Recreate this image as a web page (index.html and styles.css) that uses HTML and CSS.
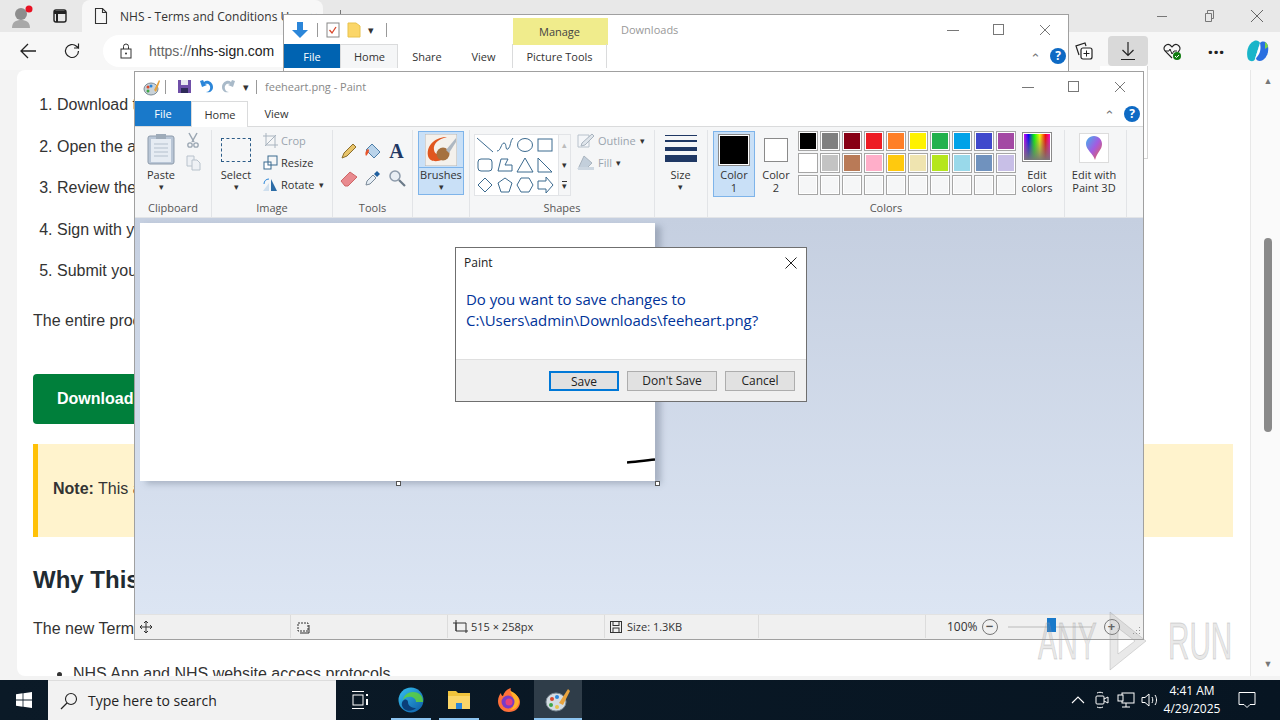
FILE: index.html
```html
<!DOCTYPE html>
<html lang="en">
<head>
  <meta charset="UTF-8" />
  <title>feeheart.png - Paint</title>
  <link rel="stylesheet" href="styles.css">
</head>
<body>

  <!-- browser behind the windows -->
  <div class="browser">
    <div class="tab-strip">
      <div class="profile">
        <svg width="24" height="24" viewBox="0 0 24 24"><circle cx="11" cy="10" r="6" fill="#8d8d8d"/><path d="M2 24c0-6 4-8 9-8s9 2 9 8z" fill="#a8a8a8"/><circle cx="19" cy="5" r="3.5" fill="#e81123"/></svg>
      </div>
      <div class="tab-switch">
        <svg width="16" height="16" viewBox="0 0 16 16"><rect x="2" y="2" width="12" height="12" rx="2" fill="none" stroke="#222" stroke-width="1.4"/><path d="M2 3h12v3H6v8H4V6H2z" fill="#222"/></svg>
      </div>
      <div class="tab">
        <svg width="14" height="18" viewBox="0 0 14 18"><path d="M1.5 1.5h7l4 4v11h-11zM8.5 1.5v4h4" fill="none" stroke="#333" stroke-width="1.1"/></svg>
        <span class="tab-title">NHS - Terms and Conditions Up</span>
        <span class="tab-close">✕</span>
      </div>
      <div class="tab-divider"></div>
      <div class="browser-controls">
        <svg width="12" height="12" viewBox="0 0 12 12"><path d="M1 6.5h10" stroke="#777"/></svg>
        <svg width="12" height="14" viewBox="0 0 12 14"><path d="M2.5 4.5h6v8h-6zM4.500 4.500v-3h6v8h-2" fill="none" stroke="#777"/></svg>
        <svg width="14" height="14" viewBox="0 0 14 14"><path d="M1 1l12 12M13 1L1 13" stroke="#666"/></svg>
      </div>
    </div>

    <div class="toolbar">
      <div class="nav-btn">
        <svg width="18" height="18" viewBox="0 0 18 18"><path d="M17 9H2M9 2L2 9l7 7" fill="none" stroke="#222" stroke-width="1.3"/></svg>
      </div>
      <div class="nav-btn">
        <svg width="18" height="18" viewBox="0 0 18 18"><path d="M15.500 9a6.500 6.500 0 1 1-2-4.700L15.500 6V1.500M15.500 6H11" fill="none" stroke="#222" stroke-width="1.2"/></svg>
      </div>
      <div class="address">
        <svg width="12" height="16" viewBox="0 0 12 16"><rect x="1" y="6" width="10" height="9" fill="none" stroke="#333"/><path d="M3.500 6V3.500a2.500 2.500 0 0 1 5 0V6" fill="none" stroke="#333"/><circle cx="6" cy="10.500" r="1" fill="#333"/></svg>
        <span><span class="scheme">https://</span>nhs-sign.com</span>
      </div>
      <div class="toolbar-icons">
        <div class="tool-icon">
          <svg width="20" height="20" viewBox="0 0 20 20"><path d="M5 14l-3-9 9-3 1 3" fill="none" stroke="#222" stroke-width="1.200"/><rect x="7" y="7" width="11" height="11" rx="2" fill="#fff" stroke="#222" stroke-width="1.200"/><path d="M12.500 9.500v6M9.500 12.500h6" stroke="#222"/></svg>
        </div>
        <div class="tool-icon active">
          <svg width="18" height="20" viewBox="0 0 18 20"><path d="M9 1v13M3.500 9L9 14.500 14.500 9M2 18.500h14" fill="none" stroke="#222" stroke-width="1.200"/></svg>
        </div>
        <div class="tool-icon">
          <svg width="20" height="20" viewBox="0 0 20 20"><path d="M10 17L3 10c-3-4 2-8 5-6l2 2 2-2c3-2 8 2 5 6l-1 1" fill="none" stroke="#222" stroke-width="1.100"/><path d="M3 10h4l1-2 2 5 2-3h3" fill="none" stroke="#222"/><circle cx="15" cy="15" r="4" fill="#107c10"/><path d="M13 15l1.500 1.500L17 14" fill="none" stroke="#fff"/></svg>
        </div>
        <div class="tool-icon dots">···</div>
        <div class="tool-icon copilot">
          <svg width="24" height="24" viewBox="0 0 24 24"><path d="M8 2c3-1 5 0 6 2L9 20c-1 3-5 3-7 0-2-5-1-15 6-18z" fill="#19b5c9"/><path d="M14 4c3-3 7-1 8 3 1 6-1 11-5 14-3 2-7 1-7-2z" fill="#2a6fe0"/><path d="M9 20l5-16c1 5 1 11-5 16z" fill="#fff"/><path d="M19 3c2 1 3 3 3 5l-3 2z" fill="#7bd64a"/></svg>
        </div>
      </div>
    </div>

    <div class="page-wrap">
      <main class="page">
        <ol class="steps">
          <li>Download the signing app</li>
          <li>Open the app on your device</li>
          <li>Review the document</li>
          <li>Sign with your NHS login</li>
          <li>Submit your document</li>
        </ol>
        <p class="intro">The entire process takes only a few minutes.</p>
        <a class="download-btn">Download Now</a>
        <div class="note"><strong>Note:</strong> This agreement must be signed.</div>
        <h2>Why This Update</h2>
        <p>The new Terms and Conditions cover:</p>
        <ul class="bullets">
          <li>NHS App and NHS website access protocols</li>
        </ul>
      </main>
      <div class="scrollbar">
        <span class="arrow">▲</span>
        <div class="thumb"></div>
        <span class="arrow">▼</span>
      </div>
    </div>
  </div>

  <!-- download flyout, mostly covered -->
  <div class="flyout"></div>

  <!-- explorer window -->
  <div class="explorer">
    <div class="exp-title">
      <svg width="18" height="18" viewBox="0 0 18 18"><path d="M6 1h6v8h5l-8 8-8-8h5z" fill="#2b86d9"/></svg>
      <span class="qa-sep"></span>
      <svg width="14" height="16" viewBox="0 0 14 16"><rect x="1" y="1" width="12" height="14" fill="#fff" stroke="#888"/><path d="M3.500 8l2.500 3 4-6" fill="none" stroke="#d9472b" stroke-width="1.300"/></svg>
      <svg width="14" height="16" viewBox="0 0 14 16"><path d="M1 1h8l4 3v11H1z" fill="#fbd668" stroke="#e8c24d"/></svg>
      <span class="qa-drop">▾</span>
      <span class="qa-sep"></span>
      <div class="manage-tab">Manage</div>
      <span class="exp-name">Downloads</span>
      <div class="win-controls">
        <svg width="12" height="12" viewBox="0 0 12 12"><path d="M0 6.500h12" stroke="#777"/></svg>
        <svg width="12" height="12" viewBox="0 0 12 12"><rect x=".5" y=".5" width="10" height="10" fill="none" stroke="#777"/></svg>
        <svg width="12" height="12" viewBox="0 0 12 12"><path d="M1 1l10 10M11 1L1 11" stroke="#777"/></svg>
      </div>
    </div>
    <div class="exp-tabs">
      <div class="file-tab exp-file">File</div>
      <div class="rib-tab current exp-home">Home</div>
      <div class="rib-tab exp-share">Share</div>
      <div class="rib-tab exp-view">View</div>
      <div class="rib-tab picture-tools">Picture Tools</div>
      <div class="rib-right exp-right">
        <span class="chevron">⌃</span>
        <span class="help">?</span>
      </div>
    </div>
  </div>

  <!-- paint window -->
  <div class="paint">
    <div class="paint-title">
      <svg width="18" height="18" viewBox="0 0 18 18"><ellipse cx="8" cy="11" rx="7" ry="6" fill="#c9d2d8" stroke="#7c8a94"/><circle cx="5" cy="9" r="1.500" fill="#d9472b"/><circle cx="8" cy="8" r="1.500" fill="#2b86d9"/><circle cx="5" cy="13" r="1.500" fill="#3fa648"/><path d="M11 12l5-10 1 1-4 11z" fill="#e8a33d"/></svg>
      <span class="qa-sep first"></span>
      <svg width="15" height="15" viewBox="0 0 15 15"><rect x="1" y="1" width="13" height="13" fill="#6f4fa8"/><rect x="4" y="1" width="7" height="5" fill="#e8e8f0"/><rect x="4" y="9" width="7" height="5" fill="#2d2a58"/></svg>
      <svg width="15" height="15" viewBox="0 0 15 15"><path d="M1 2l2 6 5-2-2-1c3-1 6 1 5 5-.5 2-2 3-4 3 4 1 7-1 7-5 0-5-6-8-9-5L4 1z" fill="#2b86d9"/></svg>
      <svg width="15" height="15" viewBox="0 0 15 15"><path d="M14 2l-2 6-5-2 2-1C6 4 3 6 4 10c.5 2 2 3 4 3-4 1-7-1-7-5 0-5 6-8 9-5l1-2z" fill="#a9bac9"/></svg>
      <span class="qa-drop">▾</span>
      <span class="qa-sep last"></span>
      <span class="paint-name">feeheart.png - Paint</span>
      <div class="win-controls">
        <svg width="12" height="12" viewBox="0 0 12 12"><path d="M0 6.500h12" stroke="#777"/></svg>
        <svg width="12" height="12" viewBox="0 0 12 12"><rect x=".5" y=".5" width="10" height="10" fill="none" stroke="#777"/></svg>
        <svg width="12" height="12" viewBox="0 0 12 12"><path d="M1 1l10 10M11 1L1 11" stroke="#777"/></svg>
      </div>
    </div>
    <div class="paint-tabs">
      <div class="file-tab paint-file">File</div>
      <div class="rib-tab current paint-home">Home</div>
      <div class="rib-tab paint-view">View</div>
      <div class="rib-right">
        <span class="chevron">⌃</span>
        <span class="help">?</span>
      </div>
    </div>

    <div class="ribbon">
      <section class="group g-clipboard">
        <div class="group-body">
          <div class="big-tool paste-tool">
            <svg width="28" height="32" viewBox="0 0 28 32"><rect x="1" y="3" width="26" height="28" rx="2" fill="#b9c6d6" stroke="#8d9bab"/><rect x="4" y="6" width="20" height="23" fill="#e6ecf3"/><path d="M7 11h14M7 15h14M7 19h14M7 23h14" stroke="#b4c0cd"/><rect x="9" y="1" width="10" height="5" fill="#9eabb9"/></svg>
            <span>Paste</span>
            <span class="drop">▾</span>
          </div>
          <div class="mini-col">
            <svg width="14" height="16" viewBox="0 0 14 16"><path d="M3 1l5 9M11 1L6 10" stroke="#9aa6b2" stroke-width="1.500"/><circle cx="4" cy="13" r="2.200" fill="none" stroke="#9aa6b2" stroke-width="1.300"/><circle cx="10" cy="13" r="2.200" fill="none" stroke="#9aa6b2" stroke-width="1.300"/></svg>
            <svg width="15" height="16" viewBox="0 0 15 16"><path d="M1 1h7v10H1z" fill="#eef1f5" stroke="#b8c2cc"/><path d="M6 5h5l3 3v7H6z" fill="#eef1f5" stroke="#b8c2cc"/></svg>
          </div>
        </div>
        <div class="group-label">Clipboard</div>
      </section>

      <section class="group g-image">
        <div class="group-body">
          <div class="big-tool select-tool">
            <div class="select-box"></div>
            <span>Select</span>
            <span class="drop">▾</span>
          </div>
          <div class="text-tools">
            <div class="text-tool muted"><svg width="15" height="15" viewBox="0 0 15 15"><path d="M3 0v12h12M0 3h12v12M2 13L13 2" fill="none" stroke="#a9b4bf"/></svg>Crop</div>
            <div class="text-tool"><svg width="15" height="15" viewBox="0 0 15 15"><rect x="1" y="7" width="7" height="7" fill="#fff" stroke="#3b6a8f"/><rect x="5" y="1" width="9" height="9" fill="none" stroke="#3b6a8f"/></svg>Resize</div>
            <div class="text-tool"><svg width="15" height="15" viewBox="0 0 15 15"><path d="M0 14l6-8v8z" fill="#cfdfee"/><path d="M8 14V2l6 12z" fill="#2c6ca6"/><path d="M1 7c0-3 2-5 5-5" fill="none" stroke="#2b86d9"/></svg>Rotate <span class="drop inline">▾</span></div>
          </div>
        </div>
        <div class="group-label">Image</div>
      </section>

      <section class="group g-tools">
        <div class="group-body tool-grid">
          <svg width="18" height="18" viewBox="0 0 18 18"><path d="M2 16l2-5 9-9 3 3-9 9z" fill="#e8c46a" stroke="#8a6d2c"/></svg>
          <svg width="18" height="18" viewBox="0 0 18 18"><path d="M8 2l8 8-6 6-8-8z" fill="#b9d3ea" stroke="#4d7ea8"/><path d="M4 7C1 9 1 12 2 14c2-2 3-4 3-6" fill="#e8552b"/></svg>
          <span class="text-icon">A</span>
          <svg width="18" height="18" viewBox="0 0 18 18"><path d="M1 12l9-9 7 5-9 9H5z" fill="#e98a8f" stroke="#c66"/></svg>
          <svg width="18" height="18" viewBox="0 0 18 18"><path d="M2 16l1-4 6-6 3 3-6 6z" fill="#e6eef5" stroke="#7a8a99"/><path d="M10 5l3-3 3 3-3 3z" fill="#1f5f9f"/></svg>
          <svg width="18" height="18" viewBox="0 0 18 18"><circle cx="7" cy="7" r="5" fill="#e8eef4" stroke="#8d9bab" stroke-width="1.500"/><path d="M11 11l6 6" stroke="#6b7a89" stroke-width="2.200"/></svg>
        </div>
        <div class="group-label"><span>Tools</span></div>
      </section>

      <section class="group g-brushes">
        <div class="brush-btn">
          <div class="brush-icon">
            <svg width="32" height="32" viewBox="0 0 32 32"><rect width="32" height="32" fill="#f4f1ec" stroke="#b5b5b5"/><path d="M3 22C1 10 12 3 22 3c-9 2-14 7-13 13 1 6 7 5 10 1l4 4c-5 7-18 9-20 1z" fill="#e0561f"/><circle cx="18" cy="20" r="6.500" fill="#a5713f"/><path d="M21 16L31 4v4L24 19z" fill="#aeb8c2"/></svg>
          </div>
          <span>Brushes</span>
          <span class="drop">▾</span>
        </div>
      </section>

      <section class="group g-shapes">
        <div class="group-body shapes-body">
          <div class="gallery">
            <div class="gallery-grid">
              <svg viewBox="0 0 18 18"><path d="M1 2l16 14"/></svg>
              <svg viewBox="0 0 18 18"><path d="M1 15c4 0 4-8 7-8s1 8 4 6 2-9 5-11"/></svg>
              <svg viewBox="0 0 18 18"><ellipse cx="9" cy="9" rx="7.500" ry="6.500"/></svg>
              <svg viewBox="0 0 18 18"><rect x="2" y="3" width="14" height="12"/></svg>
              <svg viewBox="0 0 18 18"><rect x="2" y="3" width="14" height="12" rx="3"/></svg>
              <svg viewBox="0 0 18 18"><path d="M2 15l3-12h7l-3 6h7v6z"/></svg>
              <svg viewBox="0 0 18 18"><path d="M9 2l8 14H1z"/></svg>
              <svg viewBox="0 0 18 18"><path d="M2 2l14 14H2z"/></svg>
              <svg viewBox="0 0 18 18"><path d="M9 2l7 7-7 7-7-7z"/></svg>
              <svg viewBox="0 0 18 18"><path d="M9 2l7 5-3 9H5L2 7z"/></svg>
              <svg viewBox="0 0 18 18"><path d="M5 2h8l4 7-4 7H5L1 9z"/></svg>
              <svg viewBox="0 0 18 18"><path d="M2 5h8V1l7 8-7 8v-4H2z"/></svg>
            </div>
            <div class="gallery-scroll">
              <span class="faint">▴</span>
              <span>▾</span>
              <span class="more">▾</span>
            </div>
          </div>
          <div class="text-tools shape-opts">
            <div class="text-tool muted"><svg width="18" height="15" viewBox="0 0 18 15"><path d="M1 2h11v12H1z" fill="#f4f6f9" stroke="#b8c2cc"/><path d="M5 10L15 1l2 2-9 9-4 1z" fill="#dfe5eb" stroke="#a9b4bf"/></svg>Outline <span class="drop inline">▾</span></div>
            <div class="text-tool muted"><svg width="18" height="15" viewBox="0 0 18 15"><path d="M7 1l8 7-6 6H1z" fill="#c3cfdb" stroke="#a9b4bf"/><rect x="1" y="12" width="16" height="3" fill="#cdd7e1"/></svg>Fill <span class="drop inline">▾</span></div>
          </div>
        </div>
        <div class="group-label">Shapes</div>
      </section>

      <section class="group g-size">
        <div class="big-tool size-tool">
          <div class="size-lines">
            <i class="s1"></i><i class="s2"></i><i class="s3"></i><i class="s4"></i>
          </div>
          <span>Size</span>
          <span class="drop">▾</span>
        </div>
      </section>

      <section class="group g-colors">
        <div class="group-body colors-body">
          <div class="color-btn selected">
            <div class="color-well black"></div>
            <span>Color<br>1</span>
          </div>
          <div class="color-btn">
            <div class="color-well small"></div>
            <span>Color<br>2</span>
          </div>
          <div class="palette">
            <i class="c" style="background:#000"></i><i class="c" style="background:#7f7f7f"></i><i class="c" style="background:#880015"></i><i class="c" style="background:#ed1c24"></i><i class="c" style="background:#ff7f27"></i><i class="c" style="background:#fff200"></i><i class="c" style="background:#22b14c"></i><i class="c" style="background:#00a2e8"></i><i class="c" style="background:#3f48cc"></i><i class="c" style="background:#a349a4"></i>
            <i class="c" style="background:#fff"></i><i class="c" style="background:#c3c3c3"></i><i class="c" style="background:#b97a57"></i><i class="c" style="background:#ffaec9"></i><i class="c" style="background:#ffc90e"></i><i class="c" style="background:#efe4b0"></i><i class="c" style="background:#b5e61d"></i><i class="c" style="background:#99d9ea"></i><i class="c" style="background:#7092be"></i><i class="c" style="background:#c8bfe7"></i>
            <i class="c"></i><i class="c"></i><i class="c"></i><i class="c"></i><i class="c"></i><i class="c"></i><i class="c"></i><i class="c"></i><i class="c"></i><i class="c"></i>
          </div>
          <div class="edit-colors">
            <div class="rainbow"></div>
            <span>Edit<br>colors</span>
          </div>
        </div>
        <div class="group-label">Colors</div>
      </section>

      <section class="group g-3d">
        <div class="edit-3d">
          <div class="icon-3d">
            <svg width="18" height="26" viewBox="0 0 18 26"><defs><linearGradient id="drop3d" x1="0" y1="0" x2="1" y2="1"><stop offset="0" stop-color="#3fb4ee"/><stop offset=".5" stop-color="#a45be0"/><stop offset="1" stop-color="#f0603a"/></linearGradient></defs><path d="M9 1c5 0 8 4 8 8 0 6-5 8-7 16-2-7-9-10-9-16 0-4 3-8 8-8z" fill="url(#drop3d)"/></svg>
          </div>
          <span>Edit with<br>Paint 3D</span>
        </div>
      </section>
      <section class="group g-rest"></section>
    </div>

    <div class="canvas-area">
      <div class="canvas">
        <svg class="squiggle" width="28" height="8" viewBox="0 0 28 8"><path d="M0 6.500c6-1 16-1.500 28-3" fill="none" stroke="#000" stroke-width="2.500"/></svg>
        <i class="handle h-bottom"></i>
        <i class="handle h-corner"></i>
      </div>
    </div>

    <div class="statusbar">
      <div class="st c1">
        <svg width="12" height="12" viewBox="0 0 12 12"><path d="M6 0v12M0 6h12M4 2l2-2 2 2M4 10l2 2 2-2M2 4L0 6l2 2M10 4l2 2-2 2" fill="none" stroke="#333"/></svg>
      </div>
      <div class="st c2">
        <svg width="14" height="14" viewBox="0 0 14 14"><path d="M1 3h10v8H1z" fill="none" stroke="#333" stroke-dasharray="2 1"/><path d="M3 13h9V5" fill="none" stroke="#333"/></svg>
      </div>
      <div class="st c3">
        <svg width="15" height="14" viewBox="0 0 15 14"><path d="M3 0v3H0M3 3h10v8H3zM13 13v-2h2M3 3v8" fill="none" stroke="#333"/></svg>
        <span>515 × 258px</span>
      </div>
      <div class="st c4">
        <svg width="12" height="12" viewBox="0 0 12 12"><rect x=".5" y=".5" width="11" height="11" fill="none" stroke="#333"/><rect x="3" y=".5" width="6" height="4" fill="none" stroke="#333"/><rect x="3" y="7" width="6" height="4.500" fill="none" stroke="#333"/></svg>
        <span>Size: 1.3KB</span>
      </div>
      <div class="st c5"></div>
      <div class="st c6">
        <span>100%</span>
        <span class="zoom-round">−</span>
        <div class="zoom-track"><i class="zoom-thumb"></i></div>
        <span class="zoom-round">+</span>
        <svg class="grip" width="10" height="10" viewBox="0 0 10 10"><path d="M8 1h1v1H8zM5 4h1v1H5zM8 4h1v1H8zM2 7h1v1H2zM5 7h1v1H5zM8 7h1v1H8z" fill="#999"/></svg>
      </div>
    </div>
  </div>

  <!-- save dialog -->
  <div class="dialog">
    <div class="dlg-head">
      <span>Paint</span>
      <svg width="12" height="12" viewBox="0 0 12 12"><path d="M.5.5l11 11M11.500.5l-11 11" stroke="#222"/></svg>
    </div>
    <div class="dlg-msg">Do you want to save changes to<br>C:\Users\admin\Downloads\feeheart.png?</div>
    <div class="dlg-foot">
      <button class="dlg-btn default">Save</button>
      <button class="dlg-btn wide">Don't Save</button>
      <button class="dlg-btn">Cancel</button>
    </div>
  </div>

  <!-- watermark -->
  <div class="watermark">
    <span class="wm-any">ANY</span>
    <svg width="40" height="62" viewBox="0 0 40 62"><path d="M2 2l36 29L2 60zM10 18v26l17-13z" fill="#9a9a9a" fill-opacity=".22" fill-rule="evenodd" stroke="#9a9a9a" stroke-opacity=".35"/></svg>
    <span class="wm-run">RUN</span>
  </div>

  <!-- taskbar -->
  <div class="taskbar">
    <div class="start">
      <svg width="16" height="16" viewBox="0 0 16 16"><path d="M0 2.200l6.600-.9v6.300H0zM7.400 1.200L16 0v7.600H7.400zM0 8.400h6.600v6.300L0 13.800zM7.400 8.400H16V16l-8.600-1.200z" fill="#fff"/></svg>
    </div>
    <div class="search">
      <svg width="18" height="18" viewBox="0 0 18 18"><circle cx="11" cy="7" r="5.500" fill="none" stroke="#222" stroke-width="1.100"/><path d="M7 11l-6 6" stroke="#222" stroke-width="1.200"/></svg>
      <span>Type here to search</span>
    </div>
    <div class="task-item">
      <svg width="16" height="18" viewBox="0 0 16 18"><path d="M0 .5h12M0 17.500h12" stroke="#fff"/><rect x="1" y="4" width="10" height="10" fill="none" stroke="#fff"/><rect x="14" y="3" width="2" height="2" fill="#fff"/><rect x="14" y="8" width="2" height="6" fill="#fff"/></svg>
    </div>
    <div class="task-item running t-edge">
      <svg width="26" height="26" viewBox="0 0 26 26"><defs><linearGradient id="edgeg" x1="0" y1="0" x2="1" y2="1"><stop offset="0" stop-color="#35c1f1"/><stop offset="1" stop-color="#0c59a4"/></linearGradient></defs><circle cx="13" cy="13" r="12.500" fill="url(#edgeg)"/><path d="M25 14c0-6-5-9-10-9-5 0-9 3-10 8 2-3 6-4 9-3 3 1 4 3 4 5h7z" fill="#5ed03b" opacity=".85"/><path d="M10 15c0 4 4 6 8 6-3 3-8 4-12 1-3-3-3-7 0-9 2-1 4 0 4 2z" fill="#0a3e7a"/></svg>
    </div>
    <div class="task-item running">
      <svg width="24" height="22" viewBox="0 0 24 22"><path d="M1 2h8l2 2h12v16H1z" fill="#f0c33c"/><path d="M1 7h22v13H1z" fill="#fbd668"/><rect x="9" y="14" width="6" height="6" fill="#2b86d9"/></svg>
    </div>
    <div class="task-item t-firefox">
      <svg width="24" height="26" viewBox="0 0 24 26"><path d="M12 25C5 25 1 20 1 14c0-4 2-7 3-8 0 2 1 3 2 3 1-4 4-7 8-8-1 2 0 4 2 5 4 2 7 5 7 9 0 6-5 10-11 10z" fill="#ff7139"/><path d="M13 4c4 1 9 5 9 10s-4 9-9 9c3-2 4-5 4-8 0-5-3-8-4-11z" fill="#ffb12a"/><circle cx="11" cy="15" r="6.500" fill="#7a3bc6"/><circle cx="12" cy="15" r="3.500" fill="#e83f7a"/></svg>
    </div>
    <div class="task-item running current-app">
      <svg width="26" height="26" viewBox="0 0 26 26"><ellipse cx="11" cy="15" rx="10" ry="9" fill="#d3dce2" stroke="#7c8a94"/><circle cx="7" cy="12" r="2" fill="#d9472b"/><circle cx="12" cy="10" r="2" fill="#2b86d9"/><circle cx="6" cy="18" r="2" fill="#3fa648"/><circle cx="12" cy="20" r="2" fill="#e8c24d"/><path d="M14 16L23 2l2 2-7 14z" fill="#e8a33d"/></svg>
    </div>
    <div class="tray">
      <div class="tray-icon">
        <svg width="14" height="8" viewBox="0 0 14 8"><path d="M1 7l6-6 6 6" fill="none" stroke="#fff" stroke-width="1.100"/></svg>
      </div>
      <div class="tray-icon">
        <svg width="14" height="18" viewBox="0 0 14 18"><rect x="1" y="5" width="8" height="8" rx="1" fill="none" stroke="#fff"/><path d="M9 8l4-2v6l-4-2M2 2c2-1 4-1 6 0M2 16c2 1 4 1 6 0" fill="none" stroke="#fff"/></svg>
      </div>
      <div class="tray-icon">
        <svg width="18" height="16" viewBox="0 0 18 16"><rect x="5" y="1" width="12" height="10" fill="none" stroke="#fff"/><rect x="1" y="3" width="5" height="6" fill="#0b1a27" stroke="#fff"/><path d="M5 15h8M9 11v4" stroke="#fff"/></svg>
      </div>
      <div class="tray-icon">
        <svg width="18" height="16" viewBox="0 0 18 16"><path d="M1 5.500h3L8 2v12l-4-3.500H1z" fill="none" stroke="#fff"/><path d="M11 5c1 2 1 4 0 6M14 3c2 3 2 7 0 10" fill="none" stroke="#fff"/></svg>
      </div>
      <div class="clock"><span>4:41 AM</span><span>4/29/2025</span></div>
      <svg class="notify" width="18" height="18" viewBox="0 0 18 18"><path d="M1 1.500h16v12h-5l-3 3-3-3H1z" fill="none" stroke="#fff"/></svg>
    </div>
  </div>

</body>
</html>
```

FILE: styles.css
```css
body {
  margin: 0;
  width: 1280px;
  height: 720px;
  overflow: hidden;
  position: relative;
  font-family: "Open Sans", "Noto Sans", sans-serif;
  font-size: 11px;
  color: #333;
  background: #f3f3f3;
}

svg {
  display: block;
  flex-shrink: 0;
}

/* browser */
.browser {
  display: flex;
  flex-direction: column;
  height: 680px;
}

.tab-strip {
  display: flex;
  align-items: center;
  height: 32px;
  background: #e8e8e8;
  flex-shrink: 0;
}

.profile {
  width: 24px;
  margin-left: 10px;
}

.tab-switch {
  margin-left: 18px;
}

.tab {
  display: flex;
  align-items: center;
  gap: 12px;
  width: 241px;
  height: 32px;
  margin-left: 14px;
  padding-left: 12px;
  box-sizing: border-box;
  background: #f7f7f7;
  border-radius: 8px 8px 0 0;
  font-size: 12px;
  color: #333;
}

.tab-title {
  white-space: nowrap;
}

.tab-close {
  font-size: 11px;
}

.tab-divider {
  width: 1px;
  height: 12px;
  margin-left: 17px;
  background: #777;
}

.browser-controls {
  display: flex;
  align-items: center;
  gap: 35px;
  margin-left: auto;
  padding-right: 16px;
}

.toolbar {
  display: flex;
  align-items: center;
  height: 38px;
  background: #f7f7f7;
  flex-shrink: 0;
}

.nav-btn {
  width: 44px;
  display: flex;
  justify-content: center;
  margin-left: 6px;
}

.nav-btn + .nav-btn {
  margin-left: 0;
}

.address {
  display: flex;
  align-items: center;
  gap: 17px;
  width: 900px;
  height: 32px;
  margin-left: 9px;
  padding-left: 17px;
  background: #fff;
  border-radius: 16px;
  font-family: "Liberation Sans", sans-serif;
  font-size: 14px;
  color: #222;
}

.scheme {
  color: #666;
}

.toolbar-icons {
  display: flex;
  align-items: center;
  gap: 4px;
  margin-left: auto;
  padding-right: 2px;
}

.tool-icon {
  width: 40px;
  height: 30px;
  display: flex;
  align-items: center;
  justify-content: center;
  border-radius: 4px;
}

.tool-icon.active {
  background: #d9d9d9;
}

.tool-icon.dots {
  font-size: 20px;
  font-weight: bold;
  color: #222;
}

.tool-icon.copilot {
  margin-left: -2px;
}

.page-wrap {
  flex: 1;
  display: flex;
  min-height: 0;
  margin-left: 17px;
  margin-bottom: 4px;
  background: #fff;
  border-radius: 8px 0 0 8px;
}

.page {
  flex: 1;
  overflow: hidden;
  box-sizing: border-box;
  padding: 22px 17px 0 16px;
  font-family: "Liberation Sans", sans-serif;
  font-size: 16px;
  line-height: 25.6px;
  color: #333;
  white-space: nowrap;
}

.steps {
  margin: 0 0 24px;
  padding-left: 24px;
}

.steps li {
  margin-bottom: 16px;
}

.steps li:last-child {
  margin-bottom: 0;
}

.page p {
  margin: 0;
}

.page .intro {
  margin-bottom: 40px;
}

.download-btn {
  display: block;
  width: 200px;
  height: 50px;
  box-sizing: border-box;
  padding: 12px 24px;
  background: #007f3b;
  color: #fff;
  font-weight: bold;
  border-radius: 4px;
}

.note {
  margin-top: 20px;
  height: 93px;
  box-sizing: border-box;
  padding: 32px 15px;
  background: #fff3cd;
  border-left: 5px solid #ffc107;
}

.page h2 {
  margin: 28px 0 0;
  font-size: 24px;
  line-height: 30px;
  color: #212b32;
}

.page h2 + p {
  margin-top: 21px;
}

.bullets {
  margin: 20px 0 0;
  padding-left: 40px;
}

.scrollbar {
  width: 30px;
  display: flex;
  flex-direction: column;
  align-items: center;
  box-sizing: border-box;
  padding: 5px 0 6px 5px;
  background: #fafafa;
  border-left: 1px solid #e8e8e8;
}

.arrow {
  font-size: 9px;
  line-height: 12px;
  color: #777;
}

.thumb {
  width: 8px;
  height: 194px;
  margin-top: 151px;
  margin-bottom: auto;
  background: #8a8a8a;
  border-radius: 4px;
}

.flyout {
  position: absolute;
  left: 1100px;
  top: 66px;
  width: 47px;
  height: 92px;
  background: #fff;
  border-right: 1px solid #d5d5d5;
  border-bottom: 1px solid #d5d5d5;
}

/* window chrome */
.explorer,
.paint {
  position: absolute;
  box-sizing: border-box;
  background: #fff;
  border: 1px solid #a0a0a0;
}

.explorer {
  left: 283px;
  top: 14px;
  width: 786px;
  height: 58px;
}

.paint {
  left: 134px;
  top: 71px;
  width: 1010px;
  height: 569px;
  display: flex;
  flex-direction: column;
}

.exp-title,
.paint-title {
  display: flex;
  align-items: center;
  gap: 7px;
  height: 29px;
}

.exp-title {
  padding-left: 7px;
}

.paint-title {
  padding-left: 8px;
}

.qa-sep {
  width: 1px;
  height: 14px;
  background: #999;
  margin: 0 1px;
}

.qa-sep.first {
  margin: 0 4px 0 -3px;
}

.qa-sep.last {
  margin: 0 1px 0 -4px;
}

.qa-drop {
  font-size: 11px;
  color: #333;
  width: 10px;
}

.manage-tab {
  width: 95px;
  height: 27px;
  margin: 3px 0 0 118px;
  background: #f0ec8c;
  text-align: center;
  line-height: 27px;
  color: #444;
  padding-right: 2px;
  box-sizing: border-box;
}

.exp-name {
  margin-left: 6px;
  color: #999;
}

.paint-name {
  color: #888;
}

.win-controls {
  display: flex;
  align-items: center;
  gap: 34px;
  margin-left: auto;
  padding-right: 17px;
}

.exp-tabs,
.paint-tabs {
  display: flex;
  align-items: center;
  height: 24px;
}

.paint-tabs {
  height: 25px;
  border-bottom: 1px solid #dadbdc;
  flex-shrink: 0;
}

.file-tab {
  height: 100%;
  width: 56px;
  display: flex;
  align-items: center;
  justify-content: center;
  color: #fff;
}

.exp-file {
  background: #0063b1;
}

.paint-file {
  background: #1979ca;
}

.rib-tab {
  height: 100%;
  display: flex;
  align-items: center;
  justify-content: center;
  color: #333;
  box-sizing: border-box;
}

.rib-tab.current {
  width: 57px;
  background: #f5f6f7;
  border: 1px solid #dadbdc;
  border-bottom: none;
}

.rib-tab.exp-home {
  width: 58px;
  padding-left: 1px;
}

.rib-tab.paint-home {
  background: #fff;
  height: 26px;
  padding-left: 1px;
  align-self: flex-start;
}

.exp-share {
  width: 58px;
}

.exp-view {
  width: 55px;
}

.picture-tools {
  width: 95px;
  margin-left: 1px;
  border-left: 1px solid #dadbdc;
  border-right: 1px solid #dadbdc;
}

.paint-view {
  width: 57px;
}

.rib-right {
  display: flex;
  align-items: center;
  gap: 9px;
  margin-left: auto;
  padding-right: 3px;
}

.exp-right {
  padding-right: 2px;
}

.chevron {
  font-size: 13px;
  line-height: 13px;
  color: #777;
  padding-top: 4px;
}

.help {
  width: 16px;
  height: 16px;
  border-radius: 50%;
  background: #0e6ac4;
  color: #fff;
  font-weight: bold;
  font-size: 12px;
  line-height: 16px;
  text-align: center;
}

/* ribbon */
.ribbon {
  display: flex;
  height: 91px;
  flex-shrink: 0;
  background: #f5f6f7;
  border-bottom: 1px solid #e2e4e7;
  box-sizing: border-box;
}

.group {
  display: flex;
  flex-direction: column;
  box-sizing: border-box;
  border-right: 1px solid #e2e4e7;
  margin: 3px 0 0;
}

.g-clipboard { width: 77px; }
.g-image { width: 121px; }
.g-tools { width: 80px; }
.g-brushes { width: 57px; }
.g-shapes { width: 185px; }
.g-size { width: 53px; }
.g-colors { width: 357px; }
.g-3d { width: 62px; }
.g-rest { flex: 1; border: none; }

.group-body {
  flex: 1;
  display: flex;
}

.group-label {
  height: 19px;
  line-height: 19px;
  text-align: center;
  color: #555;
}

.big-tool {
  display: flex;
  flex-direction: column;
  align-items: center;
  width: 50px;
  line-height: 14px;
  color: #333;
}

.paste-tool {
  margin-left: 1px;
}

.big-tool > svg {
  margin-top: 3px;
  margin-bottom: 3px;
}

.drop {
  font-size: 9px;
  line-height: 9px;
  color: #333;
}

.drop.inline {
  margin-left: 1px;
}

.mini-col {
  display: flex;
  flex-direction: column;
  gap: 7px;
  padding-top: 2px;
}

.select-tool {
  width: 48px;
}

.select-box {
  width: 28px;
  height: 22px;
  margin: 8px 0 6px;
  border: 1px dashed #2c5c88;
}

.text-tools {
  display: flex;
  flex-direction: column;
  gap: 6px;
  padding-top: 2px;
}

.text-tool {
  display: flex;
  align-items: center;
  gap: 3px;
  height: 16px;
  color: #333;
  white-space: nowrap;
}

.text-tool.muted {
  color: #9aa4ae;
}

.g-image .text-tools {
  margin-left: 3px;
}

.tool-grid {
  display: grid;
  grid-template-columns: repeat(3, 24px);
  grid-auto-rows: 27px;
  justify-content: center;
  align-items: center;
  justify-items: center;
  padding-top: 7px;
}

.text-icon {
  font-family: "Liberation Serif", serif;
  font-size: 20px;
  font-weight: bold;
  color: #1f3864;
  line-height: 18px;
}

.brush-btn {
  width: 46px;
  height: 64px;
  margin: 1px 0 0 5px;
  box-sizing: border-box;
  display: flex;
  flex-direction: column;
  align-items: center;
  background: #c9e0f7;
  border: 1px solid #7eb4ea;
  line-height: 14px;
  color: #333;
}

.brush-icon {
  padding: 2px 0 1px;
  width: 100%;
  display: flex;
  justify-content: center;
  border-bottom: 1px solid #7eb4ea;
}

.shapes-body {
  gap: 6px;
  padding-left: 4px;
}

.gallery {
  display: flex;
  width: 97px;
  height: 62px;
  margin-top: 4px;
  background: #fff;
  border: 1px solid #e2e4e7;
  box-sizing: border-box;
}

.gallery-grid {
  display: grid;
  grid-template-columns: repeat(4, 20px);
  grid-auto-rows: 20px;
  width: 83px;
  justify-items: center;
  align-items: center;
}

.gallery-grid svg {
  width: 18px;
  height: 18px;
  fill: none;
  stroke: #3b6a8f;
}

.gallery-scroll {
  flex: 1;
  display: flex;
  flex-direction: column;
  align-items: center;
  justify-content: space-around;
  background: #f5f6f7;
  border-left: 1px solid #e2e4e7;
  font-size: 9px;
  line-height: 10px;
}

.gallery-scroll .faint {
  color: #bbb;
}

.gallery-scroll .more {
  border-top: 1px solid #333;
  line-height: 8px;
}

.shape-opts {
  padding-top: 2px;
}

.size-tool {
  width: 51px;
}

.size-lines {
  width: 32px;
  height: 34px;
  margin: 2px 0;
}

.size-lines i {
  display: block;
  background: #1f3864;
}

.s1 { height: 1px; margin-top: 3px; }
.s2 { height: 2px; margin-top: 4px; }
.s3 { height: 4px; margin-top: 5px; }
.s4 { height: 7px; margin-top: 4px; }

.colors-body {
  padding-left: 5px;
}

.color-btn {
  width: 42px;
  height: 66px;
  margin-top: 1px;
  box-sizing: border-box;
  display: flex;
  flex-direction: column;
  align-items: center;
  border: 1px solid transparent;
  line-height: 13px;
  text-align: center;
  color: #333;
}

.color-btn.selected {
  background: #c9e0f7;
  border-color: #7eb4ea;
}

.color-well {
  box-sizing: border-box;
  border: 1px solid #8a8a8a;
  box-shadow: inset 0 0 0 1px #fff;
  background: #fff;
}

.color-well.black {
  width: 32px;
  height: 32px;
  margin: 2px 0;
  background: #000;
}

.color-well.small {
  width: 24px;
  height: 24px;
  margin: 6px 0;
}

.palette {
  display: grid;
  grid-template-columns: repeat(10, 20px);
  grid-auto-rows: 20px;
  gap: 2px;
  margin: 1px 0 0 1px;
}

.c {
  display: block;
  border: 1px solid #a6a6a6;
  box-shadow: inset 0 0 0 1px #fff;
  background: #f5f6f7;
}

.edit-colors {
  width: 44px;
  margin-left: -1px;
  display: flex;
  flex-direction: column;
  align-items: center;
  line-height: 13px;
  text-align: center;
  color: #333;
}

.rainbow {
  width: 28px;
  height: 28px;
  margin: 2px 0 6px;
  border: 1px solid #8a8a8a;
  box-shadow: inset 0 0 0 1px #fff;
  background: linear-gradient(to bottom, transparent, #777), linear-gradient(to right, #f0f, #00f, #0f0, #ff0, #f00, #f0f);
}

.edit-3d {
  width: 58px;
  display: flex;
  flex-direction: column;
  align-items: center;
  line-height: 13px;
  text-align: center;
  color: #333;
  white-space: nowrap;
}

.icon-3d {
  width: 28px;
  height: 28px;
  margin: 3px 0 5px;
  display: flex;
  align-items: center;
  justify-content: center;
  background: #fff;
  border: 1px solid #dcdcdc;
}

/* canvas */
.canvas-area {
  flex: 1;
  min-height: 0;
  padding: 5px 0 0 5px;
  background: linear-gradient(to bottom, #c5cfe0, #dce5f3);
}

.canvas {
  position: relative;
  width: 515px;
  height: 258px;
  background: #fff;
  box-shadow: 6px 3px 6px rgba(90, 100, 120, 0.35);
}

.squiggle {
  position: absolute;
  right: 0;
  bottom: 17px;
}

.handle {
  position: absolute;
  width: 5px;
  height: 5px;
  box-sizing: border-box;
  background: #fff;
  border: 1px solid #555;
}

.h-bottom { left: 256px; bottom: -5px; }
.h-corner { right: -5px; bottom: -5px; }

.statusbar {
  display: flex;
  height: 25px;
  flex-shrink: 0;
  padding-bottom: 1px;
  background: #f0f0f0;
  border-top: 1px solid #e2e2e2;
  box-sizing: border-box;
  color: #333;
}

.st {
  display: flex;
  align-items: center;
  gap: 5px;
  box-sizing: border-box;
  padding-left: 5px;
  border-right: 1px solid #dcdcdc;
  font-size: 11px;
}

.c1 { width: 156px; }
.c2 { width: 157px; padding-left: 6px; }
.c3 { width: 157px; padding-left: 5px; gap: 3px; }
.c4 { width: 154px; padding-left: 5px; }
.c5 { width: 167px; }
.c6 {
  flex: 1;
  border: none;
  padding-left: 21px;
  font-size: 12px;
  gap: 4px;
}

.zoom-round {
  width: 14px;
  height: 14px;
  border: 1px solid #777;
  border-radius: 50%;
  line-height: 13px;
  text-align: center;
  font-size: 13px;
  font-weight: bold;
  color: #555;
}

.zoom-track {
  position: relative;
  width: 84px;
  height: 2px;
  margin: 0 8px 0 6px;
  background: #d5d5d5;
}

.zoom-thumb {
  position: absolute;
  left: 39px;
  top: -8px;
  width: 9px;
  height: 14px;
  background: #1979ca;
}

.grip {
  margin: 8px 2px 0 auto;
}

/* save dialog */
.dialog {
  position: absolute;
  left: 455px;
  top: 247px;
  width: 352px;
  height: 155px;
  box-sizing: border-box;
  display: flex;
  flex-direction: column;
  background: #fff;
  border: 1px solid #6f6f6f;
}

.dlg-head {
  display: flex;
  align-items: center;
  justify-content: space-between;
  height: 29px;
  padding: 0 9px 0 8px;
  font-size: 12px;
  color: #222;
}

.dlg-msg {
  flex: 1;
  padding: 12px 0 0 10px;
  font-size: 15px;
  line-height: 21px;
  letter-spacing: -0.05px;
  color: #003399;
  white-space: nowrap;
}

.dlg-foot {
  display: flex;
  justify-content: flex-end;
  align-items: center;
  gap: 8px;
  height: 42px;
  padding-right: 11px;
  background: #f0f0f0;
  border-top: 1px solid #dfdfdf;
  box-sizing: border-box;
}

.dlg-btn {
  width: 70px;
  height: 20px;
  padding: 0;
  font-family: inherit;
  font-size: 12px;
  color: #222;
  background: #e1e1e1;
  border: 1px solid #adadad;
}

.dlg-btn.wide {
  width: 90px;
}

.dlg-btn.default {
  border: 2px solid #0078d7;
}

/* watermark */
.watermark {
  position: absolute;
  left: 1038px;
  top: 610px;
  display: flex;
  align-items: center;
  height: 62px;
  font-family: "Liberation Sans", sans-serif;
  font-size: 52px;
  line-height: 62px;
  color: rgba(150, 150, 150, 0.22);
  -webkit-text-stroke: 1px rgba(150, 150, 150, 0.35);
  pointer-events: none;
}

.watermark span {
  display: block;
  overflow: visible;
  transform-origin: left center;
}

.wm-any {
  width: 70px;
  transform: scaleX(0.55);
}

.wm-run {
  width: 64px;
  margin-left: 20px;
  transform: scaleX(0.57);
}

/* taskbar */
.taskbar {
  position: absolute;
  left: 0;
  bottom: 0;
  width: 100%;
  height: 40px;
  display: flex;
  align-items: center;
  background: linear-gradient(to right, #0b1a27, #071522);
}

.start {
  width: 48px;
  display: flex;
  justify-content: center;
}

.search {
  width: 288px;
  height: 40px;
  display: flex;
  align-items: center;
  gap: 10px;
  box-sizing: border-box;
  padding-left: 12px;
  background: #f2f2f2;
  border-top: 1px solid #ddd;
  font-size: 14px;
  color: #222;
}

.task-item {
  position: relative;
  width: 48px;
  height: 40px;
  display: flex;
  align-items: center;
  justify-content: center;
  box-sizing: border-box;
}

.task-item.t-edge {
  margin-left: 3px;
}

.task-item.t-firefox {
  margin-left: 2px;
}

.task-item.running::after {
  content: '';
  position: absolute;
  left: 4px;
  right: 4px;
  bottom: 0;
  height: 2px;
  background: #8cc4f0;
}

.task-item.current-app {
  margin-left: 1px;
  background: #2f3d49;
}

.task-item.current-app::after {
  left: 0;
  right: 0;
}

.tray {
  display: flex;
  align-items: center;
  margin-left: auto;
  padding-right: 24px;
}

.tray-icon {
  width: 24px;
  display: flex;
  justify-content: center;
}

.clock {
  display: flex;
  flex-direction: column;
  align-items: center;
  gap: 2px;
  width: 60px;
  margin: 0 16px 0 0;
  font-size: 12px;
  line-height: 16px;
  color: #fff;
}
```
